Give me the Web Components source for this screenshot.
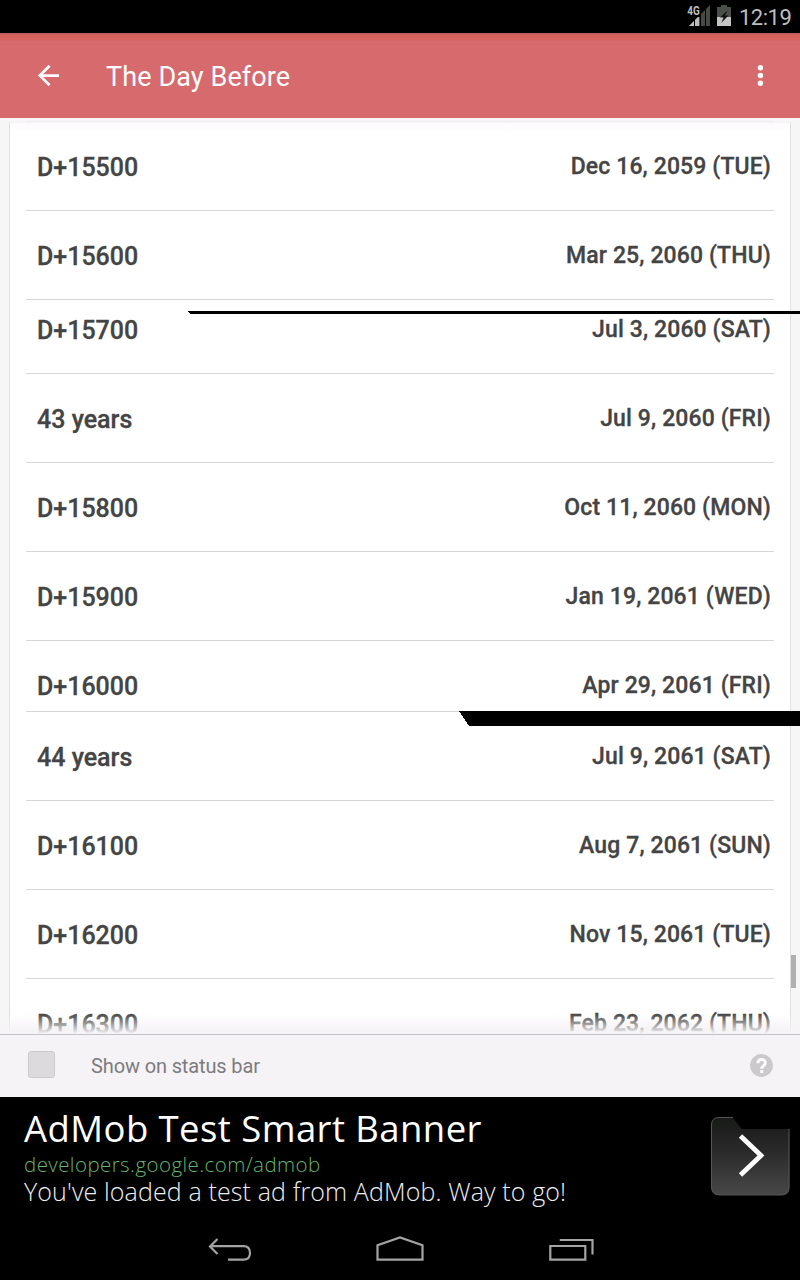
<!DOCTYPE html>
<html lang="en">
<head>
<meta charset="utf-8">
<title>The Day Before</title>
<style>
html,body{margin:0;background:#000}
body{width:800px;height:1280px;overflow:hidden;font-family:Roboto,sans-serif}
</style>
</head>
<body>
<day-app></day-app>
<script>
const define = (name, html) => customElements.define(name, class extends HTMLElement {
  connectedCallback() {
    if (this.shadowRoot) return;
    const t = document.createElement('template');
    t.innerHTML = html;
    this.attachShadow({mode: 'open'}).append(t.content.cloneNode(true));
  }
});

define('status-bar', `<style>
:host{display:flex;height:33px;background:#000;align-items:flex-start;justify-content:flex-end;color:#bebebe}
svg{flex:none;display:block}
time{font-size:22px;line-height:26px;padding:5px 9px 0 6px;width:52px;white-space:nowrap;letter-spacing:-.5px}
text{font:bold 13px Roboto,sans-serif}
</style>
<svg width="47" height="33" viewBox="686 0 47 33">
<path d="M710 5V26H689Z" fill="#454a45"/><path d="M699 16V26H689Z" fill="#bebebe"/>
<path d="M686 4h14v13h-14z" fill="#000"/>
<path d="M694.5 17v9M700.5 11v15M705.5 8v18" stroke="#000" stroke-width="1"/>
<text x="687.3" y="15.3" fill="#bebebe" textLength="12.5" lengthAdjust="spacingAndGlyphs">4G</text>
<path d="M721 5h6v2h4v10h-14V7h4z" fill="#4a4f4a"/><path d="M717 17h14v9h-14z" fill="#c4c4c4"/>
<path d="M727.5 10.5 720 17.5h3.6l-2.4 5.5 7.2-7.5h-3.3z" fill="#111"/>
</svg><time>12:19</time>`);

define('app-bar', `<style>
:host{display:flex;height:85px;box-sizing:border-box;align-items:center;color:#fff;background:linear-gradient(#b45b58 0,#d4605e 2px,#d86462 7px,#d66a6c 8px)}
svg{flex:none;display:block}
h1{flex:1;margin:3px 0 0;font-weight:400;font-size:27px;letter-spacing:.1px;line-height:34px;white-space:nowrap}
</style>
<svg width="106" height="85" viewBox="0 33 106 85" fill="none" stroke="#fff" stroke-width="2.7"><path d="M59 75.6H40M49.6 65.8 39.8 75.6 49.6 85.3"/></svg>
<h1><slot></slot></h1>
<svg width="80" height="85" viewBox="720 33 80 85" fill="#fff"><circle cx="760.4" cy="67.7" r="2.7"/><circle cx="760.4" cy="75.5" r="2.7"/><circle cx="760.4" cy="83.3" r="2.7"/></svg>`);

define('day-row', `<style>
:host{display:flex;flex:none;box-sizing:border-box;height:89px;margin:0 16px;padding:0 3px 0 11px;justify-content:space-between;align-items:flex-end;border-bottom:1px solid #d6d6d6;color:#444;font-weight:500;-webkit-text-stroke:.3px #444}
:host([cut=bottom]){height:71px}
:host([cut=bottom]) span{margin-bottom:9px}
:host([cut=bottom]) .date{margin-bottom:10px}
:host([cut=top]){height:74px}
span{white-space:nowrap;line-height:30px;margin-bottom:27px}
.name{font-size:25px}
.date{font-size:23px;margin-bottom:28px;letter-spacing:.12px}
</style><span class="name"><slot name="name"></slot></span><span class="date"><slot></slot></span>`);

define('day-list', `<style>
:host{display:block;position:relative;height:916px;background:#f6f6f6;overflow:hidden}
.card{display:flex;flex-direction:column;height:916px;margin:0 10px;box-sizing:border-box;padding-top:4px;background:linear-gradient(#f6f6f6 4.9px,#fdfafd 5px,#fff 14px,#fff 902px,#fcf8fc 910px,#f4f4f4 912px);box-shadow:0 0 0 1px #e0e0e0}
.line{position:absolute;left:26px;width:748px;top:3px;height:1px;background:#eeeef0}
.edge{position:absolute;left:0;right:0;top:0;height:4px;background:#f6f6f6}
.fade{position:absolute;left:0;right:0;bottom:0;height:20px;background:linear-gradient(#fcf8fc00,#f6f4f6)}
.thumb{position:absolute;left:791px;top:837px;width:5px;height:33px;background:#b0b0b0}
.tear{position:absolute;display:block}
</style><div class="card"><slot></slot></div><div class="edge"></div><div class="line"></div><div class="fade"></div><div class="thumb"></div>
<svg class="tear" style="left:188px;top:193px" width="612" height="3" shape-rendering="crispEdges"><path d="M0 0H612V3H2Z"/></svg>
<svg class="tear" style="left:459px;top:593px" width="341" height="15" shape-rendering="crispEdges"><path d="M0 0H341V15H10Z"/></svg>`);

define('option-bar', `<style>
:host{display:flex;height:63px;box-sizing:border-box;border-top:1px solid #c2c2c8;background:#f6f3f7;align-items:center;padding:0 27px 0 28px;color:#7d7b7d}
i{box-sizing:border-box;width:27px;height:27px;border:1px solid #cbc9cb;border-radius:3px;background:#dcdadc;margin-bottom:4px}
span{flex:1;padding-left:36px;font-size:20px;line-height:24px;letter-spacing:-.13px;white-space:nowrap}
svg{display:block;margin-bottom:2px}
</style><i></i><span><slot></slot></span>
<svg width="23" height="23" viewBox="0 0 23 23"><circle cx="11.5" cy="11.5" r="11.4" fill="#ccc9cc"/><path d="M7.8 9.2C7.8 4.3 15.4 4.5 15.3 8.9C15.3 11.5 11.7 11.6 11.7 14.8" fill="none" stroke="#fff" stroke-width="2.9"/><path d="M10.2 16.2h3V19h-3z" fill="#fff"/></svg>`);

define('ad-banner', `<style>
:host{display:flex;height:121px;background:#000;color:#fff;font-family:"Open Sans",sans-serif}
.copy{flex:1;padding:10px 0 0 24px;white-space:nowrap}
.t{font-size:36.5px;line-height:42px;letter-spacing:.43px}
.u{font-size:20.5px;line-height:30px;color:#66b56b;font-weight:300;letter-spacing:.43px}
.d{font-size:25px;line-height:24px;color:#eee;font-weight:300;letter-spacing:.13px}
svg{flex:none;display:block}
</style><div class="copy"><div class="t"><slot name="title"></slot></div><div class="u"><slot name="url"></slot></div><div class="d"><slot></slot></div></div>
<svg width="90" height="121" viewBox="710 1097 90 121"><defs><linearGradient id="g" x1="0" y1="0" x2="0" y2="1"><stop stop-color="#171a17"/><stop offset=".4" stop-color="#282828"/><stop offset="1" stop-color="#484848"/></linearGradient></defs>
<path d="M719 1117.5H733L741.5 1129H789.5V1187Q789.5 1195 781.5 1195H719.5Q711.5 1195 711.5 1187V1125Q711.5 1117.5 719 1117.5Z" fill="url(#g)"/>
<path d="M733 1117.5H719Q711.5 1117.5 711.5 1125V1187Q711.5 1195 719.5 1195H781.5Q789 1195 789 1187V1129" fill="none" stroke="#555"/>
<path d="M740.5 1136 761 1155.5 740.5 1175" fill="none" stroke="#fff" stroke-width="4.8"/></svg>`);

define('nav-bar', `<style>:host{display:block;height:62px;background:#000}svg{display:block}</style>
<svg width="800" height="62" viewBox="0 1218 800 62" fill="none" stroke="#a4a4a4" stroke-width="2.2">
<path d="M210 1246.2H243.5Q250 1246.2 250 1253Q250 1259.6 243.5 1259.6H228M217.5 1239 210 1246.4 217.5 1254"/>
<path d="M377.5 1259.6V1245.2L400 1237.5 422.5 1245.2V1259.6Z"/>
<path d="M550.3 1246H585.3V1259.6H550.3ZM559.7 1240H592.5V1254.5"/></svg>`);

const days = [['D+15500','Dec 16, 2059 (TUE)'],['D+15600','Mar 25, 2060 (THU)'],['D+15700','Jul 3, 2060 (SAT)','top'],['43 years','Jul 9, 2060 (FRI)'],['D+15800','Oct 11, 2060 (MON)'],['D+15900','Jan 19, 2061 (WED)'],['D+16000','Apr 29, 2061 (FRI)','bottom'],['44 years','Jul 9, 2061 (SAT)'],['D+16100','Aug 7, 2061 (SUN)'],['D+16200','Nov 15, 2061 (TUE)'],['D+16300','Feb 23, 2062 (THU)']];
define('day-app', `<style>:host{display:flex;flex-direction:column;width:800px;height:1280px;overflow:hidden}</style>
<status-bar></status-bar><app-bar>The Day Before</app-bar>
<day-list>${days.map(([n,d,c]) => `<day-row${c ? ` cut="${c}"` : ''}><span slot="name">${n}</span>${d}</day-row>`).join('')}</day-list>
<option-bar>Show on status bar</option-bar>
<ad-banner><span slot="title">AdMob Test Smart Banner</span><span slot="url">developers.google.com/admob</span>You've loaded a test ad from AdMob. Way to go!</ad-banner>
<nav-bar></nav-bar>`);
</script>
</body>
</html>
